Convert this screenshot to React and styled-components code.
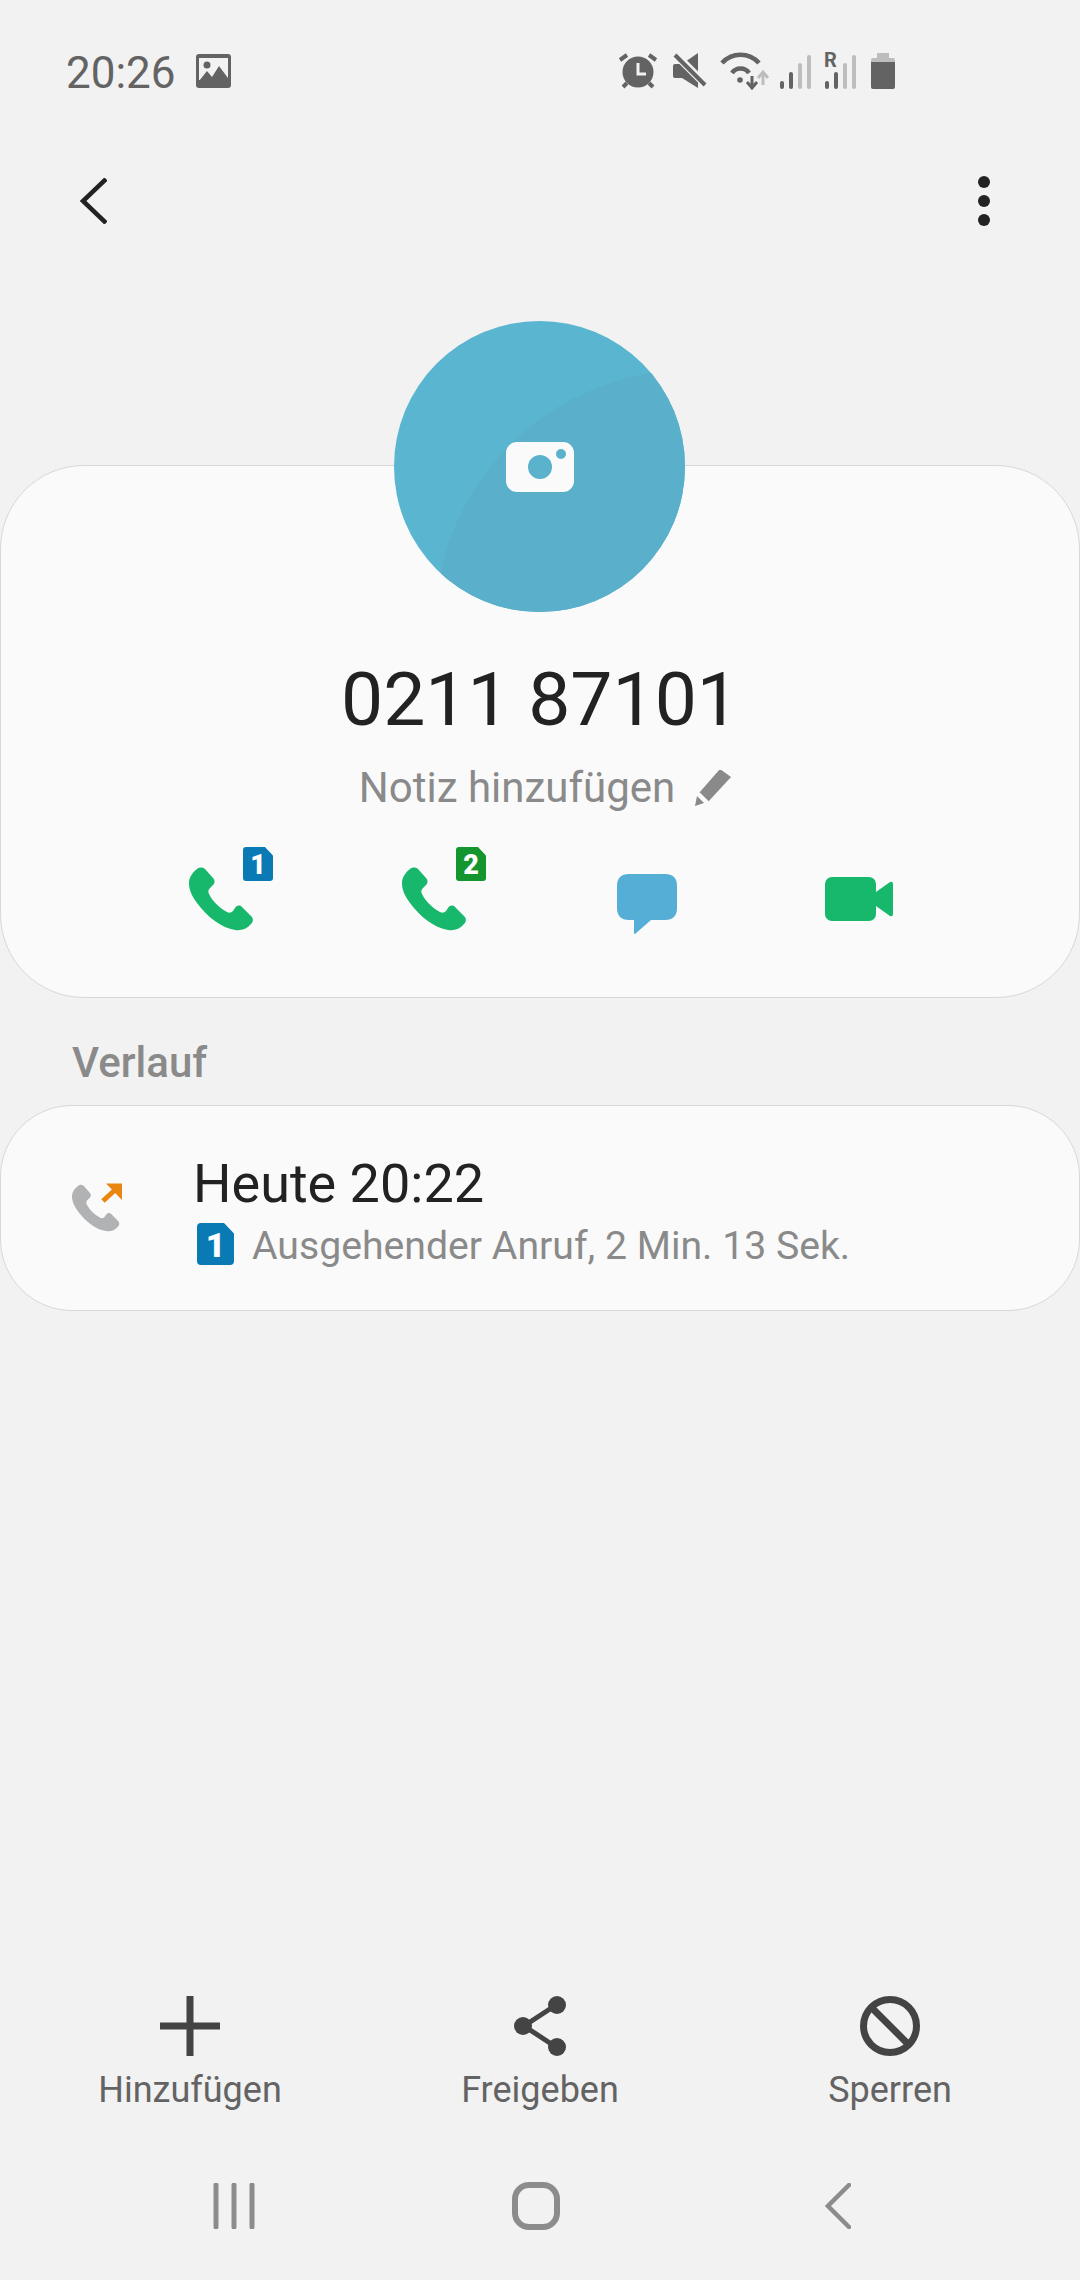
import styled, { createGlobalStyle } from "styled-components";

const GlobalStyle = createGlobalStyle`
  html, body {
    margin: 0;
    padding: 0;
    background: #f2f2f2;
    font-family: Roboto, "Noto Sans", sans-serif;
  }
`;

const PHONE_PATH =
  "M8 2C10 0 14 0 16 2L24 11C26 13 26 16 24 18L21 21C19 23 19 25 20 27C24 35 31 41 38 45C40 46 42 46 44 44L46 41C48 38 51 38 53 40L62 49C65 52 64 55 62 57C58 62 52 64 46 63C33 61 18 50 8 36C2 28 0 22 0 16C0 10 4 5 8 2Z";

const App = () => {
  return (
    <Page>
      <GlobalStyle />
      <StatusBar>
        <Clock>20:26</Clock>
        <StatusIcon width="35" height="34" viewBox="0 0 35 34">
          <rect width="35" height="34" rx="3" fill="#636363" />
          <rect x="3" y="4" width="29" height="22" fill="#f2f2f2" />
          <circle cx="11" cy="11" r="3.5" fill="#636363" />
          <path d="M3 27L11 17L16 23L23 12L32 24V30H3Z" fill="#636363" />
        </StatusIcon>
        <StatusRight>
          <StatusIcon $gap={16} width="38" height="36" viewBox="0 0 38 36">
            <circle cx="19" cy="19" r="15.5" fill="#636363" />
            <path d="M19 10V21H27" fill="none" stroke="#f2f2f2" strokeWidth="3" />
            <path d="M1 7L8 2M30 2L37 7M4 34L8 30M34 34L30 30" stroke="#636363" strokeWidth="4" />
          </StatusIcon>
          <StatusIcon $gap={13} width="34" height="36" viewBox="0 0 34 36">
            <path d="M2 11H9L25 0V35L9 25H2Q0 25 0 23V13Q0 11 2 11Z" fill="#636363" />
            <path d="M0 -1L34 33" stroke="#f2f2f2" strokeWidth="8" />
            <path d="M2 2L32 32" stroke="#636363" strokeWidth="4" />
          </StatusIcon>
          <StatusIcon $gap={12} width="48" height="36" viewBox="0 0 48 36">
            <path d="M2 10C12 -1 29 -1 39 10" fill="none" stroke="#636363" strokeWidth="4.5" />
            <path d="M12 20C16 14 25 14 29 20" fill="none" stroke="#636363" strokeWidth="4.5" />
            <circle cx="20" cy="27" r="2.8" fill="#636363" />
            <path d="M32 23V33M27 29L32 35L37 29" fill="none" stroke="#636363" strokeWidth="3" />
            <path d="M43 32V21M38 25L43 19L48 25" fill="none" stroke="#bdbdbd" strokeWidth="3" />
          </StatusIcon>
          <StatusIcon $gap={13} width="31" height="36" viewBox="0 0 31 36">
            <rect x="0" y="28" width="4" height="8" rx="2" fill="#636363" />
            <rect x="9" y="19" width="4" height="17" rx="2" fill="#636363" />
            <rect x="18" y="10" width="4" height="26" rx="2" fill="#bdbdbd" />
            <rect x="27" y="2" width="4" height="34" rx="2" fill="#bdbdbd" />
          </StatusIcon>
          <StatusIcon $gap={15} width="32" height="36" viewBox="0 0 32 36">
            <SignalLetter x="0" y="14">R</SignalLetter>
            <rect x="1" y="28" width="4" height="8" rx="2" fill="#636363" />
            <rect x="10" y="19" width="4" height="17" rx="2" fill="#636363" />
            <rect x="19" y="10" width="4" height="26" rx="2" fill="#bdbdbd" />
            <rect x="28" y="2" width="4" height="34" rx="2" fill="#bdbdbd" />
          </StatusIcon>
          <StatusIcon width="24" height="36" viewBox="0 0 24 36">
            <rect x="6" y="0" width="12" height="6" fill="#bdbdbd" />
            <path d="M2 5H22Q24 5 24 7V9H0V7Q0 5 2 5Z" fill="#bdbdbd" />
            <path d="M0 9H24V34Q24 36 22 36H2Q0 36 0 34Z" fill="#636363" />
          </StatusIcon>
        </StatusRight>
      </StatusBar>

      <Toolbar>
        <svg width="27" height="46" viewBox="0 0 27 46">
          <path d="M26 1L3 23L26 45" fill="none" stroke="#222" strokeWidth="4.5" />
        </svg>
        <MoreDots>
          <i />
          <i />
          <i />
        </MoreDots>
      </Toolbar>

      <ContactCard>
        <Avatar>
          <CameraIcon width="68" height="50" viewBox="0 0 68 50">
            <rect width="68" height="50" rx="11" fill="#fafafa" />
            <circle cx="34" cy="25" r="12" fill="#5ab2cc" />
            <circle cx="55" cy="12" r="5" fill="#5ab2cc" />
          </CameraIcon>
        </Avatar>
        <PhoneNumber>0211 87101</PhoneNumber>
        <NoteRow>
          Notiz hinzufügen
          <svg width="36" height="36" viewBox="0 0 36 36">
            <path d="M25 0L36 8L13 33L4 24Z" fill="#8a8a8a" transform="translate(0 -1)" />
            <path d="M2 26L9 33L0 36Z" fill="#8a8a8a" />
            <path d="M4 23L14 33" stroke="#fafafa" strokeWidth="2" />
          </svg>
        </NoteRow>
        <ActionGrid>
          <ActionCell>
            <svg width="64" height="64" viewBox="0 0 64 64">
              <path d={PHONE_PATH} fill="#17b86c" />
            </svg>
            <SimBadge $color="#0a7ab5">1</SimBadge>
          </ActionCell>
          <ActionCell>
            <svg width="64" height="64" viewBox="0 0 64 64">
              <path d={PHONE_PATH} fill="#17b86c" />
            </svg>
            <SimBadge $color="#14952e">2</SimBadge>
          </ActionCell>
          <ActionCell>
            <ChatIcon width="60" height="60" viewBox="0 0 60 60">
              <path
                d="M12 0H48Q60 0 60 12V34Q60 46 48 46H34L18 60Q17 60 17 59V46H12Q0 46 0 34V12Q0 0 12 0Z"
                fill="#54aed6"
              />
            </ChatIcon>
          </ActionCell>
          <ActionCell>
            <VideoIcon width="68" height="44" viewBox="0 0 68 44">
              <rect width="51" height="44" rx="7" fill="#17b86c" />
              <path d="M51 15L65 5Q68 4 68 7V37Q68 40 65 39L51 29Z" fill="#17b86c" />
            </VideoIcon>
          </ActionCell>
        </ActionGrid>
      </ContactCard>

      <SectionTitle>Verlauf</SectionTitle>

      <HistoryCard>
        <CallIcon width="52" height="52" viewBox="0 0 52 52">
          <path d={PHONE_PATH} fill="#b0b2b4" transform="translate(0 2.5) scale(0.74)" />
          <path d="M31 19L44 7" stroke="#e8860f" strokeWidth="5" />
          <path d="M34 1.5H50V18Z" fill="#e8860f" />
        </CallIcon>
        <HistoryText>
          <HistoryTime>Heute 20:22</HistoryTime>
          <HistoryDetail>
            <InlineSim>1</InlineSim>
            <DetailText>Ausgehender Anruf, 2 Min. 13 Sek.</DetailText>
          </HistoryDetail>
        </HistoryText>
      </HistoryCard>

      <Spacer />

      <BottomActions>
        <BottomAction>
          <svg width="60" height="60" viewBox="0 0 60 60">
            <path d="M30 0V60M0 30H60" stroke="#444" strokeWidth="7" />
          </svg>
          <BottomLabel>Hinzufügen</BottomLabel>
        </BottomAction>
        <BottomAction>
          <svg width="60" height="60" viewBox="0 0 60 60">
            <path d="M46 9L14 30L46 51" fill="none" stroke="#444" strokeWidth="5" />
            <circle cx="47" cy="9" r="9" fill="#444" />
            <circle cx="13" cy="30" r="9" fill="#444" />
            <circle cx="47" cy="51" r="9" fill="#444" />
          </svg>
          <BottomLabel>Freigeben</BottomLabel>
        </BottomAction>
        <BottomAction>
          <svg width="60" height="60" viewBox="0 0 60 60">
            <circle cx="30" cy="30" r="26.5" fill="none" stroke="#444" strokeWidth="7" />
            <path d="M11 11L49 49" stroke="#444" strokeWidth="7" />
          </svg>
          <BottomLabel>Sperren</BottomLabel>
        </BottomAction>
      </BottomActions>

      <NavBar>
        <svg width="42" height="46" viewBox="0 0 42 46">
          <path d="M3 2V44M21 2V44M39 2V44" stroke="#8c8c8c" strokeWidth="5" strokeLinecap="round" />
        </svg>
        <svg width="48" height="48" viewBox="0 0 48 48">
          <rect x="3" y="3" width="42" height="42" rx="14" fill="none" stroke="#8c8c8c" strokeWidth="6" />
        </svg>
        <NavBack width="26" height="46" viewBox="0 0 26 46">
          <path d="M24 2L3 23L24 44" fill="none" stroke="#8c8c8c" strokeWidth="4.5" strokeLinecap="round" />
        </NavBack>
      </NavBar>
    </Page>
  );
};

export default App;

const Page = styled.div`
  display: flex;
  flex-direction: column;
  width: 1080px;
  height: 2280px;
  overflow: hidden;
  background: #f2f2f2;
`;

const StatusBar = styled.div`
  display: flex;
  align-items: center;
  gap: 20px;
  height: 36px;
  padding: 53px 185px 0 66px;
`;

const Clock = styled.span`
  margin-top: 4px;
  font-size: 44px;
  line-height: 36px;
  color: #636363;
`;

const StatusRight = styled.div`
  display: flex;
  align-items: center;
  margin-left: auto;
`;

const StatusIcon = styled.svg`
  flex: none;
  overflow: visible;
  margin-right: ${(props) => props.$gap || 0}px;
`;

const SignalLetter = styled.text`
  font-family: Roboto, sans-serif;
  font-size: 20px;
  font-weight: 700;
  fill: #636363;
`;

const Toolbar = styled.div`
  display: flex;
  align-items: center;
  justify-content: space-between;
  height: 46px;
  padding: 89px 90px 0 80px;
`;

const MoreDots = styled.div`
  display: flex;
  flex-direction: column;
  gap: 7px;

  i {
    display: block;
    width: 12px;
    height: 12px;
    border-radius: 50%;
    background: #222;
  }
`;

const ContactCard = styled.div`
  display: flex;
  flex-direction: column;
  align-items: center;
  box-sizing: border-box;
  height: 533px;
  margin-top: 241px;
  background: #fafafa;
  border: 1px solid #d8d8d8;
  border-radius: 84px;
`;

const Avatar = styled.div`
  position: relative;
  display: flex;
  align-items: center;
  justify-content: center;
  flex: none;
  width: 291px;
  height: 291px;
  margin: -145px 1px 0 0;
  overflow: hidden;
  background: #5ab6d0;
  border-radius: 50%;

  &::before {
    content: "";
    position: absolute;
    left: 41px;
    top: 49px;
    width: 510px;
    height: 510px;
    background: #5ab0cb;
    border-radius: 50%;
  }
`;

const CameraIcon = styled.svg`
  position: relative;
`;

const PhoneNumber = styled.div`
  margin-top: 44px;
  font-size: 75px;
  line-height: 86px;
  color: #222;
`;

const NoteRow = styled.div`
  display: flex;
  align-items: center;
  gap: 20px;
  margin: 22px 0 0 10px;
  font-size: 42px;
  line-height: 48px;
  color: #8a8a8a;
`;

const ActionGrid = styled.div`
  display: grid;
  grid-template-columns: repeat(4, 213px);
  margin-top: 53px;
  align-items: center;
`;

const ActionCell = styled.div`
  position: relative;
  display: flex;
  justify-content: center;
  height: 68px;
  align-items: center;
`;

const ChatIcon = styled.svg`
  margin-top: 10px;
`;

const VideoIcon = styled.svg`
  margin-right: 2px;
`;

const SimBadge = styled.span`
  position: absolute;
  left: 129px;
  top: -18px;
  width: 30px;
  height: 34px;
  clip-path: polygon(0 0, 73% 0, 100% 25%, 100% 100%, 0 100%);
  border-radius: 3px;
  background: ${(props) => props.$color};
  color: #fff;
  font-size: 27px;
  font-weight: 900;
  line-height: 36px;
  text-align: center;
`;

const SectionTitle = styled.div`
  margin: 41px 0 0 72px;
  font-size: 42px;
  font-weight: 500;
  line-height: 48px;
  color: #8a8a8a;
`;

const HistoryCard = styled.div`
  display: flex;
  align-items: center;
  box-sizing: border-box;
  height: 206px;
  margin-top: 18px;
  padding: 0 71px;
  background: #fafafa;
  border: 1px solid #d8d8d8;
  border-radius: 72px;
`;

const CallIcon = styled.svg`
  flex: none;
`;

const HistoryText = styled.div`
  display: flex;
  flex-direction: column;
  margin: 6px 0 0 69px;
`;

const HistoryTime = styled.div`
  font-size: 54px;
  line-height: 62px;
  color: #222;
`;

const HistoryDetail = styled.div`
  display: flex;
  align-items: center;
  gap: 18px;
  margin: 4px 0 0 4px;
`;

const DetailText = styled.span`
  margin-top: 4px;
  font-size: 39.2px;
  line-height: 46px;
  color: #8a8a8a;
`;

const InlineSim = styled.span`
  width: 37px;
  height: 42px;
  clip-path: polygon(0 0, 73% 0, 100% 25%, 100% 100%, 0 100%);
  border-radius: 4px;
  background: #0a7ab5;
  color: #fff;
  font-size: 34px;
  font-weight: 900;
  line-height: 44px;
  text-align: center;
`;

const Spacer = styled.div`
  flex: 1;
`;

const BottomActions = styled.div`
  display: grid;
  grid-template-columns: repeat(3, 350px);
  justify-content: center;
`;

const BottomAction = styled.div`
  display: flex;
  flex-direction: column;
  align-items: center;
  gap: 10px;
`;

const BottomLabel = styled.span`
  font-size: 36px;
  line-height: 48px;
  color: #636363;
`;

const NavBar = styled.div`
  display: flex;
  align-items: center;
  height: 48px;
  gap: 257px;
  margin-top: 68px;
  padding: 0 229px 50px 213px;
`;

const NavBack = styled.svg`
  margin-left: 8px;
`;
